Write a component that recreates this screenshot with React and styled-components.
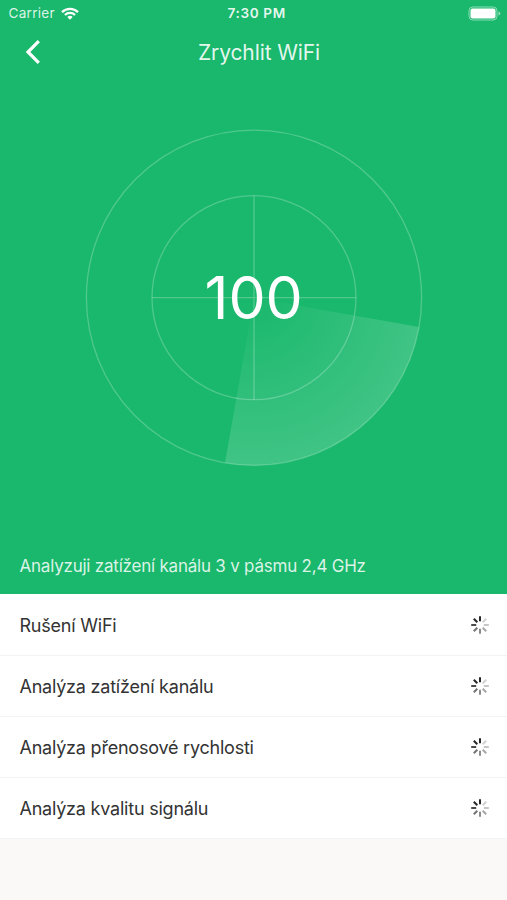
import React from 'react';
import styled, { createGlobalStyle } from 'styled-components';

const GlobalStyle = createGlobalStyle`
    * {
        box-sizing: border-box;
    }

    body {
        margin: 0;
        background-color: #faf9f7;
        font-family: Inter, "Liberation Sans", sans-serif;
    }
`;

const StyledScreen = styled.div`
    width: 507px;
    height: 900px;
    display: flex;
    flex-direction: column;
    overflow: hidden;
    background-color: #faf9f7;
`;

const StyledHero = styled.section`
    height: 594px;
    display: flex;
    flex-direction: column;
    background-color: #19b86c;
    color: #fff;
`;

const StyledStatusBar = styled.div`
    height: 27px;
    padding: 0 5px 0 8.5px;
    display: grid;
    grid-template-columns: 1fr auto 1fr;
    align-items: center;
    font-size: 13.6px;
    line-height: 27px;
`;

const StyledCarrier = styled.div`
    display: flex;
    align-items: center;
    gap: 6.5px;
    letter-spacing: .25px;
    color: rgba(255, 255, 255, .85);
`;

const StyledTime = styled.div`
    padding-left: 3px;
    font-weight: 600;
    letter-spacing: .6px;
    color: rgba(255, 255, 255, .9);
`;

const StyledBattery = styled.svg`
    justify-self: end;
`;

const StyledNavBar = styled.header`
    height: 50px;
    padding: 0 24px;
    display: grid;
    grid-template-columns: 1fr auto 1fr;
    align-items: center;
`;

const StyledBackButton = styled.button`
    width: 18px;
    height: 26px;
    padding: 0;
    border: 0;
    background: none;
    display: flex;
    cursor: pointer;
`;

const StyledTitle = styled.h1`
    margin: 0;
    padding-left: 11px;
    font-size: 21px;
    font-weight: 400;
    letter-spacing: -.1px;
    color: rgba(255, 255, 255, .9);
`;

const StyledRadar = styled.div`
    height: 442px;
    display: grid;
    justify-items: center;
    align-items: center;

    > * {
        grid-area: 1 / 1;
    }
`;

const StyledScore = styled.div`
    font-size: 59px;
    font-weight: 400;
    line-height: 60px;
    letter-spacing: -.2px;
`;

const StyledStatus = styled.p`
    margin: 35px 0 0;
    padding: 0 19.5px;
    font-size: 17px;
    line-height: 24px;
    letter-spacing: -.22px;
    color: rgba(255, 255, 255, .85);
`;

const StyledList = styled.ul`
    margin: 0;
    padding: 1px 0 0;
    list-style: none;
    background-color: #fff;
`;

const StyledRow = styled.li`
    height: 61px;
    padding: 0 18px 0 19.5px;
    display: flex;
    justify-content: space-between;
    align-items: center;
    border-bottom: 1px solid #f3f3f3;
    font-size: 18px;
    letter-spacing: -.22px;
    color: #333;
`;

const checks = [
    'Rušení WiFi',
    'Analýza zatížení kanálu',
    'Analýza přenosové rychlosti',
    'Analýza kvalitu signálu',
];

// clockwise from the top
const spokes = [.85, .18, .22, .35, .45, .55, .7, .85];

const WifiIcon = () => (
    <svg width="18" height="13" viewBox="0 0 18 13" fill="none" stroke="#fff" strokeWidth="2.2">
        <path d="M1 5.1 A11.4 11.4 0 0 1 17 5.1" />
        <path d="M3.9 8 A7.3 7.3 0 0 1 14.1 8" />
        <path d="M9 12.7 L6.3 10 A3.9 3.9 0 0 1 11.7 10 Z" fill="#fff" stroke="none" />
    </svg>
);

const BatteryIcon = () => (
    <StyledBattery width="34" height="15" viewBox="0 0 34 15">
        <rect x="1" y="1" width="28" height="13" rx="3.8" fill="none" stroke="#fff" strokeOpacity=".5" />
        <rect x="2.5" y="2.5" width="25" height="10" rx="2" fill="#fff" />
        <path d="M30.5 5.5 Q32.3 6 32.3 7.5 Q32.3 9 30.5 9.5 Z" fill="#fff" fillOpacity=".55" />
    </StyledBattery>
);

const BackIcon = () => (
    <svg width="18" height="26" viewBox="0 0 18 26" fill="none" stroke="#fff" strokeWidth="3.2">
        <path d="M14.8 2.2 L4 13 L14.8 23.8" />
    </svg>
);

const RadarDial = () => (
    <svg width="340" height="340" viewBox="-170 -169.7 340 340" fill="none">
        <defs>
            <radialGradient id="sweep" gradientUnits="userSpaceOnUse" cx="0" cy="0" r="168">
                <stop offset="0" stopColor="#fff" stopOpacity="0" />
                <stop offset="1" stopColor="#fff" stopOpacity=".17" />
            </radialGradient>
        </defs>
        <path d="M0 0 L165 29.2 A167.6 167.6 0 0 1 -29 165 Z" fill="url(#sweep)" />
        <g stroke="#fff" strokeOpacity=".24" strokeWidth="1.3">
            <circle r="167.6" />
            <circle r="102" />
            <path d="M-102 0 H102 M0 -102 V102" />
        </g>
    </svg>
);

const Spinner = () => (
    <svg width="18" height="18" viewBox="-9 -9 18 18" stroke="#000" strokeWidth="2">
        {spokes.map((opacity, i) => (
            <line
                key={i}
                y1="-8.8"
                y2="-3.8"
                strokeOpacity={opacity}
                transform={`rotate(${i * 45})`}
            />
        ))}
    </svg>
);

const App = () => (
    <>
        <GlobalStyle />
        <StyledScreen>
            <StyledHero>
                <StyledStatusBar>
                    <StyledCarrier>
                        Carrier
                        <WifiIcon />
                    </StyledCarrier>
                    <StyledTime>7:30 PM</StyledTime>
                    <BatteryIcon />
                </StyledStatusBar>
                <StyledNavBar>
                    <StyledBackButton aria-label="Zpět">
                        <BackIcon />
                    </StyledBackButton>
                    <StyledTitle>Zrychlit WiFi</StyledTitle>
                </StyledNavBar>
                <StyledRadar>
                    <RadarDial />
                    <StyledScore>100</StyledScore>
                </StyledRadar>
                <StyledStatus>Analyzuji zatížení kanálu 3 v pásmu 2,4 GHz</StyledStatus>
            </StyledHero>
            <StyledList>
                {checks.map(label => (
                    <StyledRow key={label}>
                        {label}
                        <Spinner />
                    </StyledRow>
                ))}
            </StyledList>
        </StyledScreen>
    </>
);

export default App;
